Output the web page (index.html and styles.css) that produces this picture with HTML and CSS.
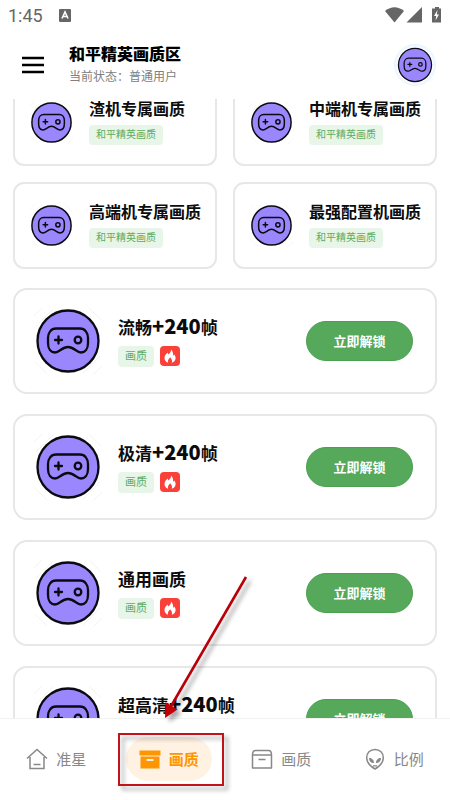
FILE: index.html
```html
<!DOCTYPE html>
<html lang="zh-CN">
<head>
<meta charset="utf-8">
<meta name="viewport" content="width=device-width, initial-scale=1">
<title>和平精英画质区</title>
<link rel="stylesheet" href="styles.css">
</head>
<body>
<svg class="sprite" aria-hidden="true">
  <symbol id="pad" viewBox="0 0 70 70">
    <g stroke="#f3f3f3" stroke-width="1"><path d="M1 10 9 2M3 20 20 3M50 67 67 50M60 69 69 60M2 56 14 68M56 2 68 14"/></g>
    <circle cx="35" cy="35" r="30.5" fill="#9b87fd" stroke="#0b0a10" stroke-width="2.300"/>
    <g fill="none" stroke="#0b0a10" stroke-width="2.300" stroke-linecap="round" stroke-linejoin="round">
      <path d="M23 22.500H47C52 22.500 55 27 55 32V37C55 43 52 46.500 48 46.500C43.500 46.500 41 41 35 41S26.500 46.500 22 46.500C18 46.500 15 43 15 37V32C15 27 18 22.500 23 22.500Z"/>
      <path d="M25.500 30.500v7M22 34h7"/><circle cx="45" cy="34" r="3.300"/>
    </g>
  </symbol>
  <symbol id="fire" viewBox="0 0 20 20">
    <path fill="#fff" d="M11 3.500C11.300 6 9.500 7 8.500 8.500C8 7.800 7.800 7.300 7.800 6.500C5.800 8 4.500 10 4.500 12C4.500 14.500 6 16 8 16.700C7.500 14.500 8.500 13 10.300 11.300C10.700 12.500 12.800 13.800 11.800 16.700C14.200 16 15.600 14.200 15.600 12C15.600 10.500 15 9.500 14.200 8.500C14 9.200 13.700 9.500 13.200 9.800C13.300 7 12.500 4.800 11 3.500Z"/>
  </symbol>
</svg>

<div class="statusbar">
  <span class="clock">1:45</span>
  <svg class="ime" viewBox="0 0 12 13"><rect width="12" height="13" rx="1" fill="#666"/><path d="M3 9.500 6 3l3 6.500M4.200 7.500h3.600" fill="none" stroke="#fff" stroke-width="1.600"/></svg>
  <svg class="signals" viewBox="0 0 57 17"><g fill="#666"><path d="M0 4Q9.500-3.500 19 4L9.500 15.500Z"/><path d="M37 0V15.500H21.500Z"/><path d="M50 0h4v1.500h2V15.500H47V1.500h3Z"/></g><path d="M52.500 3 49 9h2.200l-.7 4.500L54 7.500h-2.200Z" fill="#fff"/></svg>
</div>

<header class="appbar">
  <button class="menu" aria-label="菜单"><svg viewBox="0 0 24 18"><path d="M1 2H23M1 9H23M1 16H23" stroke="#000" stroke-width="2.400"/></svg></button>
  <div class="heading">
    <h1>和平精英画质区</h1>
    <p>当前状态：普通用户</p>
  </div>
  <button class="avatar" aria-label="个人中心"><svg><use href="#pad"/></svg></button>
</header>

<main>
  <div class="content">
    <section class="grid">
      <article class="tile"><svg><use href="#pad"/></svg><div><h2>渣机专属画质</h2><span class="tag">和平精英画质</span></div></article>
      <article class="tile"><svg><use href="#pad"/></svg><div><h2>中端机专属画质</h2><span class="tag">和平精英画质</span></div></article>
      <article class="tile"><svg><use href="#pad"/></svg><div><h2>高端机专属画质</h2><span class="tag">和平精英画质</span></div></article>
      <article class="tile"><svg><use href="#pad"/></svg><div><h2>最强配置机画质</h2><span class="tag">和平精英画质</span></div></article>
    </section>
    <section class="list">
      <article class="row"><svg class="pic"><use href="#pad"/></svg><div class="info"><h2>流畅<b>+240</b>帧</h2><div class="tags"><span class="tag">画质</span><svg class="hot"><use href="#fire"/></svg></div></div><button class="unlock">立即解锁</button></article>
      <article class="row"><svg class="pic"><use href="#pad"/></svg><div class="info"><h2>极清<b>+240</b>帧</h2><div class="tags"><span class="tag">画质</span><svg class="hot"><use href="#fire"/></svg></div></div><button class="unlock">立即解锁</button></article>
      <article class="row"><svg class="pic"><use href="#pad"/></svg><div class="info"><h2>通用画质</h2><div class="tags"><span class="tag">画质</span><svg class="hot"><use href="#fire"/></svg></div></div><button class="unlock">立即解锁</button></article>
      <article class="row"><svg class="pic"><use href="#pad"/></svg><div class="info"><h2>超高清<b>+240</b>帧</h2><div class="tags"></div></div><button class="unlock">立即解锁</button></article>
    </section>
  </div>
</main>

<nav>
  <a href="#aim"><svg viewBox="0 0 22 22"><path d="M1 10.500 11 1.500l10 9M4 9v11.500h14V9M7.500 16.500h7" fill="none" stroke="#888" stroke-width="1.500"/></svg><span>准星</span></a>
  <a href="#quality" class="active" aria-current="page"><svg viewBox="0 0 22 22"><path fill="#ff9500" fill-rule="evenodd" d="M.5 2.500h21v5H.5ZM1.500 8.500h19v12h-19ZM7.500 11v2h7v-2Z"/></svg><span>画质</span></a>
  <a href="#quality2"><svg viewBox="0 0 22 22"><path d="M1.500 7Q1.500 2.500 4.500 2.500h13Q20.500 2.500 20.500 7v13h-19ZM1.500 7h19M7.500 11.500h7" fill="none" stroke="#888" stroke-width="1.500" stroke-linejoin="round"/></svg><span>画质</span></a>
  <a href="#ratio"><svg viewBox="0 0 22 22"><path d="M11 1.500c5 0 8.300 3.500 8.300 8.200 0 5-4.300 9-8.300 11.300C7 18.700 2.700 14.700 2.700 9.700 2.700 5 6 1.500 11 1.500Z" fill="none" stroke="#888" stroke-width="1.500"/><path fill="#888" d="M5 10c3 0 5 2 5 5-3 0-5-2-5-5ZM17 10c-3 0-5 2-5 5 3 0 5-2 5-5ZM9 17.200h4v1.300H9Z"/></svg><span>比例</span></a>
</nav>

<svg class="marks" viewBox="0 0 450 800" aria-hidden="true">
  <rect x="119" y="734" width="104" height="51" fill="none" stroke="#c0141a" stroke-width="2"/>
  <path d="M246 577 170 708" stroke="#b90008" stroke-width="2.600"/>
  <path d="M165 718 165.500 702 177.500 709.500Z" fill="#c40008"/>
</svg>
</body>
</html>
```
FILE: styles.css
```css
* { box-sizing: border-box; }
body {
  margin: 0;
  height: 100vh;
  display: flex;
  flex-direction: column;
  position: relative;
  overflow: hidden;
  background: #fff;
  color: #0c0c0c;
  font-family: Roboto, "Noto Sans CJK SC", sans-serif;
}
h1, h2, p { margin: 0; }
svg { display: block; flex: none; }
button { border: 0; padding: 0; background: none; font: inherit; }
.sprite { position: absolute; width: 0; height: 0; }

.statusbar { height: 31px; flex: none; display: flex; align-items: center; padding: 0 8px; color: #666; }
.clock { font-size: 18px; line-height: 30px; }
.ime { width: 12px; height: 13px; margin-left: 16px; }
.signals { width: 57px; height: 17px; margin-left: auto; }

.appbar { height: 68px; flex: none; display: flex; align-items: center; padding: 0 14px 0 21px; }
.menu svg { width: 24px; height: 18px; }
.heading { flex: 1; margin-left: 24px; }
h1 { font-size: 16px; line-height: 24px; font-weight: 900; color: #000; }
.heading p { font-size: 12px; line-height: 21px; color: #808080; }
.avatar { width: 42px; height: 42px; padding: 1px; border: 1px solid #e6f4ff; border-radius: 50%; box-shadow: inset 0 0 0 2px #f0f9ff; }
.avatar svg { width: 38px; height: 38px; }

main { flex: 1; min-height: 0; overflow: hidden; }
.content { margin-top: -20px; padding: 0 13px; }
.grid { display: grid; grid-template-columns: 1fr 1fr; gap: 16px; }
.tile, .row { display: flex; align-items: center; border: 2px solid #e7e7e7; background: #fff; }
.tile { height: 87px; padding-left: 14px; border-radius: 11px; gap: 15px; }
.tile > svg { width: 45px; height: 45px; }
.tile > div { padding-bottom: 3px; }
.tile h2 { font-size: 16px; line-height: 24px; margin-bottom: 3px; white-space: nowrap; }
.tag { display: block; width: max-content; padding: 0 7px; border-radius: 4px; background: #e8f5e9; color: #5dac61; font-size: 10px; line-height: 20px; }

.list { display: flex; flex-direction: column; gap: 20px; margin-top: 19px; }
.row { height: 106px; padding: 0 22px 0 18px; border-radius: 14px; }
.pic { width: 70px; height: 70px; }
.info { flex: 1; margin-left: 15px; }
.info h2 { font-size: 17px; line-height: 24px; white-space: nowrap; margin-bottom: 6px; }
.info b { font-family: "Noto Sans CJK SC", sans-serif; font-size: 20px; line-height: 20px; }
.tags { display: flex; gap: 6px; align-items: center; min-height: 21px; }
.info .tag { font-size: 11px; line-height: 21px; }
.hot { width: 20px; height: 20px; border-radius: 4px; background: #f9413a; }
.unlock { width: 107px; height: 40px; padding-bottom: 2px; border-radius: 20px; background: #56a85a; border: 1px solid #49a34e; color: #fff; font-size: 13px; font-weight: 700; }

nav { height: 82px; flex: none; display: grid; grid-template-columns: repeat(4, 1fr); align-items: center; justify-items: center; padding-bottom: 2px; border-top: 1px solid #f1f1f1; background: #fff; }
nav a { display: flex; align-items: center; gap: 8px; height: 44px; padding: 0 13px; border-radius: 22px; color: #888; font-size: 15px; text-decoration: none; }
nav svg { width: 22px; height: 22px; }
nav .active { background: #fff2e3; color: #ff9500; font-weight: 700; }

.marks { position: absolute; inset: 0; width: 100%; height: 100%; pointer-events: none; filter: drop-shadow(4px 4px 2px rgba(0, 0, 0, .35)); }
```
